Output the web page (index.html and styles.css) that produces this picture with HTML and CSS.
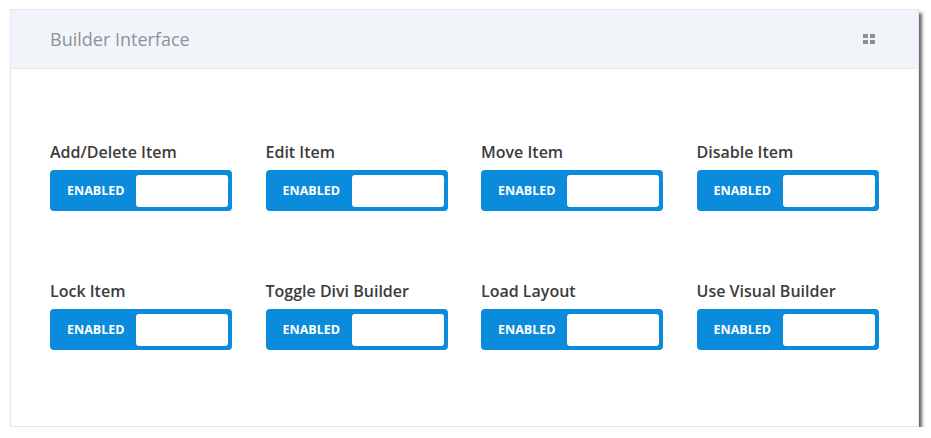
FILE: index.html
```html
<!DOCTYPE html>
<html lang="en">
<head>
    <meta charset="UTF-8">
    <title>Builder Interface</title>
    <link rel="stylesheet" href="styles.css">
</head>
<body>
    <div class="card">
        <div class="card-header">
            <h2>Builder Interface</h2>
            <svg class="grid-icon" width="13" height="11" viewBox="0 0 13 11">
                <rect x="0" y="0" width="5" height="4" fill="#8a9098"/>
                <rect x="7" y="0" width="5" height="4" fill="#8a9098"/>
                <rect x="0" y="6" width="5" height="4" fill="#8a9098"/>
                <rect x="7" y="6" width="5" height="4" fill="#8a9098"/>
            </svg>
        </div>
        <div class="card-body">
            <div class="option">
                <label>Add/Delete Item</label>
                <div class="toggle"><span>ENABLED</span><div class="knob"></div></div>
            </div>
            <div class="option">
                <label>Edit Item</label>
                <div class="toggle"><span>ENABLED</span><div class="knob"></div></div>
            </div>
            <div class="option">
                <label>Move Item</label>
                <div class="toggle"><span>ENABLED</span><div class="knob"></div></div>
            </div>
            <div class="option">
                <label>Disable Item</label>
                <div class="toggle"><span>ENABLED</span><div class="knob"></div></div>
            </div>
            <div class="option">
                <label>Lock Item</label>
                <div class="toggle"><span>ENABLED</span><div class="knob"></div></div>
            </div>
            <div class="option">
                <label>Toggle Divi Builder</label>
                <div class="toggle"><span>ENABLED</span><div class="knob"></div></div>
            </div>
            <div class="option">
                <label>Load Layout</label>
                <div class="toggle"><span>ENABLED</span><div class="knob"></div></div>
            </div>
            <div class="option">
                <label>Use Visual Builder</label>
                <div class="toggle"><span>ENABLED</span><div class="knob"></div></div>
            </div>
        </div>
    </div>
</body>
</html>
```
FILE: styles.css
```css
body, html {
    margin: 0;
    background: #fff;
    font-family: "Open Sans", Arial, sans-serif;
}

body {
    padding: 9px 0 0 10px;
}

.card {
    width: 909px;
    height: 418px;
    box-sizing: border-box;
    background: #fff;
    border: 1px solid #e3e7ee;
    box-shadow: 3px 4px 3px rgba(0, 0, 0, 0.6);
}

.card-header {
    height: 58px;
    background: #f1f4f9;
    border-bottom: 1px solid #e3e7ee;
    display: flex;
    align-items: center;
    justify-content: space-between;
    padding: 0 42px 0 39px;
}

.card-header h2 {
    margin: 0;
    font-size: 18px;
    font-weight: 400;
    color: #8b929b;
}

.grid-icon {
    display: block;
    margin-top: 1px;
}

.card-body {
    display: grid;
    grid-template-columns: repeat(4, 215.5px);
    row-gap: 69px;
    padding: 72px 0 0 39px;
}

.option label {
    display: block;
    font-size: 16px;
    font-weight: 600;
    line-height: 22px;
    color: #3c3c3c;
    margin-bottom: 7px;
}

.toggle {
    width: 182px;
    height: 41px;
    box-sizing: border-box;
    padding: 4px;
    background: #0b8bdb;
    border-radius: 4px;
    display: flex;
    align-items: center;
    justify-content: space-between;
}

.toggle span {
    color: #fff;
    font-size: 12.5px;
    font-weight: 700;
    padding-left: 13px;
}

.knob {
    width: 92px;
    height: 32px;
    background: #fff;
    border-radius: 3px;
}
```
